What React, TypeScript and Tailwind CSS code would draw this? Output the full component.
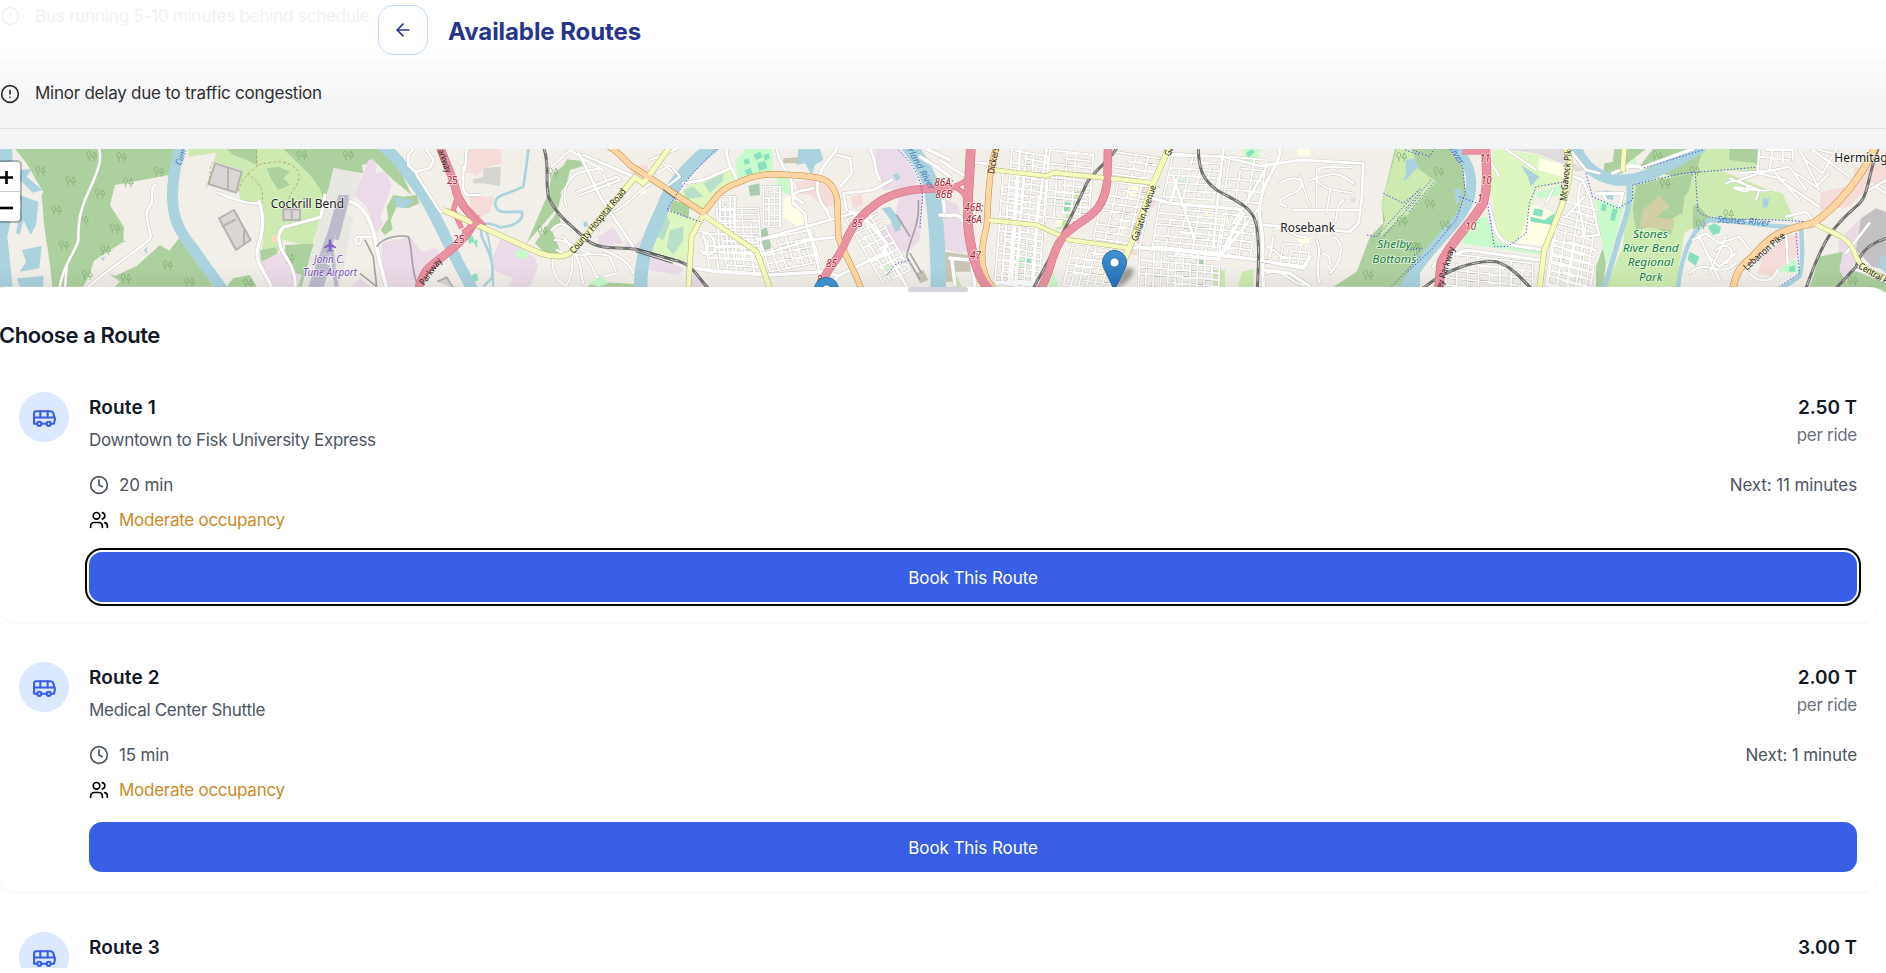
import { ArrowLeft, Bus, CircleAlert, Clock, Users } from 'lucide-react';

type Road = [string, number];
type Label = { t: string; x: number; y: number; w?: number; r?: number; s?: number; c?: string; i?: boolean };
type Tile = {
  x: number;
  areas: [string, string][];
  water: Road[];
  streets: Road[];
  rails?: string[];
  roads: [string, string, number][];
  paths?: string[];
  trees?: number[][];
  labels: Label[];
};

const FOREST = '#add19e';
const PARK = '#cdebb0';
const WATER = '#aad3df';
const IND = '#ebdbe8';
const SPORT = '#c8facc';
const PITCH = '#88e0be';
const RETAIL = '#f5dcd9';
const SCHOOL = '#ffffe5';
const GOLF = '#def6c0';
const RED = '#e892a2';
const ORANGE = '#fcd6a4';
const YELLOW = '#f7fabf';

function grid(x: number, y: number, w: number, h: number, nx: number, ny: number, skx = 0, sky = 0) {
  let d = '';
  for (let i = 0; i <= nx; i++) {
    const px = x + (w * i) / nx;
    const py = y + (sky * i) / nx;
    const cut = (i * 37) % 3 === 1 ? h * 0.3 : 0;
    d += `M${px + (skx * cut) / h} ${py + cut}L${px + skx} ${py + h}`;
  }
  for (let j = 0; j <= ny; j++) {
    const px = x + (skx * j) / ny;
    const py = y + (h * j) / ny;
    const cut = (j * 53) % 4 === 1 ? 0.35 : 0;
    d += `M${px + w * cut} ${py + sky * cut}L${px + w} ${py + sky}`;
  }
  return d;
}

const tiles: Tile[] = [
  {
    x: 0,
    areas: [
      [WATER, 'M0 27H37L40 200 22 290 38 440H0Z'],
      [WATER, 'M62 90L95 88 80 110 128 150 98 158 60 120ZM58 165L115 185 108 255 92 285 70 240 60 282 48 280 64 200ZM66 330L125 318 118 385 60 395 78 365ZM50 415L130 408 130 440H60Z'],
      [FOREST, 'M45 27H530L525 60 508 105 345 135 330 195 372 262 370 305 282 362 268 405 250 440H157L150 375 133 262 125 165 130 155 108 120 80 70Z'],
      [FOREST, 'M325 400L345 408 410 378 480 315 508 332 540 290 640 440H345L360 425Z'],
      [PARK, 'M565 27H1090L1085 100 1000 85 960 240 935 320 850 300 830 350 780 360 790 300 780 200 725 185 715 155 725 90 640 65 650 38 565 50Z'],
      [FOREST, 'M680 27H770L772 75 740 60 700 45ZM800 85L835 80 870 95 850 115 870 135 835 150 815 120ZM880 27H1150L1165 60 1085 75 1090 100 1000 85 985 150 970 180 960 145 930 105 900 75 850 27Z'],
      [FOREST, 'M780 330L830 322 830 340 785 372ZM855 315L960 310 905 440H888L885 400 855 350ZM680 440L700 415 750 405 770 440Z'],
      [IND, 'M845 335L888 400 905 405 895 440H815L775 370Z'],
      [IND, 'M1062 165L1100 75 1105 60 1122 57 1132 70 1127 100 1160 95 1175 140 1140 230 1150 250 1130 280 1100 200Z'],
      [IND, 'M1145 310L1230 290 1265 335 1310 325 1318 345 1255 400 1245 440H1150ZM1055 440L1080 415 1110 440Z'],
      [FOREST, 'M1180 165L1210 170 1250 165 1258 190 1225 205 1190 200 1172 240 1178 268 1155 285 1142 270 1165 235 1160 200Z'],
      [FOREST, 'M1090 27H1145L1200 90 1235 165 1180 120 1140 80Z'],
      [WATER, 'M1182 170L1240 182 1215 205 1190 202Z'],
      [RETAIL, 'M1405 27H1440V100L1400 100ZM1405 165H1440V230L1420 210Z'],
      ['#e8e7e2', 'M1003 83L1083 103 1040 225 1060 235 1020 440H905L960 240Z'],
      ['#bbbbcc', 'M1015 165H1047L955 440H925L985 270Z'],
      [PITCH, 'M1400 290L1415 285 1422 303 1408 312ZM1420 305L1432 298V325ZM1415 408L1428 402 1435 418 1422 425Z'],
      ['#fad9c0', 'M815 288L830 285 830 305 820 312Z'],
      [WATER, 'M302 355L316 350 310 363ZM366 300L378 303 372 308ZM432 330L442 320 440 342Z'],
    ],
    water: [
      ['M540 15C525 80 515 130 518 180C520 260 560 300 590 340C620 385 640 410 672 455', 33],
      ['M1135 10C1190 45 1215 90 1260 150C1300 210 1330 280 1360 340C1380 380 1395 410 1425 460', 34],
    ],
    streets: [
      ['M295 20C310 60 290 100 268 150C240 210 235 240 235 300C225 340 190 370 178 445M200 380L195 445', 5],
      ['M467 135C450 140 460 170 455 190C430 220 440 230 453 290C450 310 300 400 262 445', 5],
      ['M652 158C700 175 740 195 780 190', 5],
      ['M778 185C800 260 780 290 772 330C765 370 800 400 815 445', 8],
      ['M975 165L962 232 850 262C830 280 835 300 845 330C870 370 890 400 885 445', 7],
      ['M1052 185C1100 200 1120 260 1130 320S1150 400 1160 445', 9],
      ['M1115 290H1085C1060 285 1060 315 1080 312L1085 292', 5],
      ['M1250 100L1225 75V45L1240 27M1245 95L1290 85 1300 60 1280 30M1250 105L1320 215 1345 215M1390 80V150L1400 165H1440M1395 90L1400 27', 5],
    ],
    rails: [],
    roads: [
      [RED, 'M1318 15C1340 80 1360 110 1370 160C1385 200 1410 220 1450 262', 22],
      [RED, 'M1425 225C1425 280 1340 340 1290 380Q1265 400 1255 450', 22],
      [RED, 'M1375 160L1360 210 1385 265', 12],
      [YELLOW, 'M1342 213L1450 265', 13],
    ],
    paths: [],
    trees: [[275, 48], [365, 50], [122, 92], [212, 122], [477, 94], [300, 160], [170, 210], [250, 240], [192, 315], [345, 265], [317, 330], [503, 375], [568, 425], [378, 415], [385, 127], [262, 405], [745, 430], [868, 355], [1045, 45], [905, 45]],
    labels: [
      { t: 'Cockrill Bend', x: 812, y: 203, w: 220, s: 37 },
      { t: 'John C.', x: 942, y: 370, w: 92, s: 31, c: '#7a4fb5', i: true },
      { t: 'Tune Airport', x: 909, y: 407, w: 162, s: 31, c: '#7a4fb5', i: true },
      { t: '25', x: 1340, y: 133, w: 34, s: 32, c: '#b02a48' },
      { t: '25', x: 1360, y: 308, w: 34, s: 32, c: '#b02a48' },
      { t: 'arkway', x: 1313, y: 32, w: 72, r: 70, s: 28 },
      { t: 'Parkway', x: 1272, y: 437, w: 92, r: -54, s: 28 },
      { t: 'Cum', x: 542, y: 78, w: 50, r: -68, s: 28, c: '#4a80b8', i: true },
    ],
  },
  {
    x: 1410,
    areas: [
      [RETAIL, 'M0 27H90L98 70 40 85 20 110 0 90ZM0 170H72L60 215 30 235 0 230Z'],
      [FOREST, 'M282 75L290 58 330 62 340 78 300 90 290 130 270 160H235L245 105ZM235 160H275L265 200 170 310ZM265 210L272 250 245 270 275 342 230 345 195 310ZM350 440L380 425 500 433V440Z'],
      [IND, 'M90 300L130 305 195 355 205 380 180 440H115L130 415 80 395 60 370ZM385 290L430 260 460 310 415 315 440 330 385 315ZM462 300L490 320 520 290V330H470ZM545 345L640 385 625 405 535 390ZM670 400L720 440H660ZM1215 27H1290L1345 120 1330 140 1240 150 1222 90ZM1215 270L1270 250 1290 160 1360 155 1350 300 1310 340 1250 310Z'],
      [SPORT, 'M135 335L155 328 175 340 165 358 135 350ZM355 430L400 408 415 430 385 440ZM795 60L830 27H905L912 110 860 112 805 120ZM920 115L955 112 962 165 925 150Z'],
      [GOLF, 'M570 200L690 240 665 290 645 368 545 335 552 280ZM650 140L780 85 795 115 750 160 710 205 690 210 625 165Z'],
      [FOREST, 'M608 180L660 195 655 235 598 210Z'],
      ['#aacbaf', 'M835 137L868 130 870 165 840 168ZM870 270L890 262 905 325 870 335Z'],
      [SCHOOL, 'M940 175L970 168 970 200 1000 210 1002 255 980 258 940 230ZM505 148L525 145 528 160 512 165Z'],
      [RETAIL, 'M480 80L530 75 550 115 520 125 485 105ZM975 125L1040 118 1090 145 1100 200 1060 200 1020 165 985 160ZM1142 170L1175 162 1180 195 1150 205Z'],
      [PITCH, 'M820 60L835 55 840 70 825 75ZM850 45L870 35 878 50 860 60ZM880 45L895 40 900 55 885 62ZM825 90L842 83 848 100 830 105ZM862 70L885 62 892 85 868 92ZM0 285L10 290V310L0 300ZM5 405L20 400 25 420 12 425Z'],
      [WATER, 'M985 27H1050L1060 60 1035 75 1025 105 1005 70 980 75ZM1268 105L1285 100 1292 115 1278 122ZM1235 205L1260 200 1295 245 1290 270 1275 275 1262 240ZM340 248L350 243 355 258 342 262Z'],
      ['#b8dfc7', 'M640 150L670 140 700 170 650 178ZM700 130L760 100 760 120 720 160ZM560 290L580 240 590 225 600 250 580 300ZM600 270L640 260 640 300 610 345 590 320Z'],
      ['#d6d4d0', 'M40 85L92 80 90 138 40 130 10 130 8 118 40 112Z'],
      ['#c8c5b4', 'M940 55L985 52V70H940ZM1340 400L1360 390 1375 420 1350 430Z'],
      [SPORT, 'M1240 385L1265 368 1272 390 1250 408Z'],
    ],
    water: [
      ['M175 27C170 80 165 110 160 140C100 170 80 160 75 190C80 225 105 215 155 215C165 240 130 260 90 262C40 240 30 250 35 290C60 340 75 380 65 415L40 440', 8],
      ['M45 260C60 300 70 380 70 440', 6],
      ['M745 5C650 80 600 140 580 200C540 290 510 340 512 455', 40],
      ['M1310 10C1350 60 1385 110 1390 180C1400 260 1405 330 1405 450', 46],
    ],
    streets: [
      [grid(880, 140, 50, 120, 3, 7) + grid(750, 170, 45, 100, 3, 5) + grid(700, 280, 160, 110, 6, 6, 20, 10), 3],
      [grid(870, 300, 150, 95, 6, 4, 30, -30), 3],
      [grid(740, 205, 125, 150, 5, 8, 10, 0), 3],
      [grid(1130, 240, 80, 190, 4, 9, 110, -40), 3],
      ['M680 275C710 270 735 290 735 320S700 350 690 330M695 290C720 300 720 340 700 335M245 270C280 230 300 270 350 300M255 300C300 300 320 330 360 340M260 330C320 360 380 330 420 350M280 290C320 330 310 400 290 435M300 320C340 370 330 400 340 430M340 345C380 380 370 420 385 410M400 330C450 350 480 370 490 400M250 350C240 400 270 430 290 438M420 350L440 400 400 410', 4],
      ['M245 80L300 30 345 60 400 90M320 155L440 110 450 120 330 165M290 200C270 150 300 100 340 95L390 85M430 215C480 195 500 150 545 130M400 105L420 140M540 60L620 27M560 100L600 75 630 110 590 140M560 50L610 100', 4],
      ['M325 40C350 80 370 130 390 170L450 260 490 320M340 45L410 75 490 110M770 25C765 60 790 90 800 120M640 130L700 120 780 85M920 27C930 80 960 100 965 130L970 190 1005 220 1010 260 1030 320 1050 400M1100 27C1080 60 1050 80 1050 110C1030 140 1050 190 1070 210L1080 235M1000 190L970 170 980 155 1030 145M865 300L1000 262 1130 225 1170 215M870 345L1020 300 1110 290M1130 210L1120 160 1210 150 1265 120M1200 27C1220 60 1210 90 1230 120M1100 45L1140 55 1145 100 1110 140', 6],
      ['M660 382L740 395 900 405 1060 395 1105 408 1240 340 1250 310 1180 230 1140 215M1105 408L1070 445M1240 320L1310 440M1350 50L1400 80 1440 110M1370 27L1440 60M1415 140L1425 220 1440 230', 8],
    ],
    rails: ['M220 20C240 70 225 120 235 170C260 230 310 260 350 300C390 330 430 320 500 328L610 360C670 370 680 410 715 445'],
    roads: [
      [YELLOW, 'M-80 210L0 245 200 335C240 352 280 352 300 340L350 285 495 112 520 130 600 20', 15],
      [YELLOW, 'M655 445L665 290 700 225 860 335 900 445', 14],
      [ORANGE, 'M400 10Q440 30 480 75L700 218C730 190 740 150 800 130C860 100 900 100 960 105C1060 110 1090 115 1102 180L1105 290C1120 340 1150 380 1175 450', 16],
      [RED, 'M1450 146C1350 142 1290 150 1235 180C1160 230 1140 270 1115 330C1095 370 1070 390 1060 420', 22],
      [RED, 'M-20 200L20 250-20 280', 16],
    ],
    paths: ['M740 27C660 100 620 160 590 210L690 245M1285 30C1340 80 1365 140 1355 200L1350 262M1250 405L1280 370 1320 360'],
    trees: [[250, 97], [218, 272]],
    labels: [
      { t: 'County Hospital Road', x: 312, y: 343, w: 245, r: -50, s: 28 },
      { t: '86A;', x: 1393, y: 138, w: 57, s: 31, c: '#a8242e', i: true },
      { t: '86B', x: 1396, y: 174, w: 51, s: 31, c: '#a8242e', i: true },
      { t: '85', x: 1145, y: 260, w: 33, s: 31, c: '#a8242e', i: true },
      { t: '85', x: 1068, y: 382, w: 33, s: 31, c: '#a8242e', i: true },
      { t: 'rland River', x: 1312, y: 30, w: 138, r: 61, s: 27, c: '#4a80b8', i: true },
      { t: '8', x: 1040, y: 430, w: 16, s: 31, c: '#a8242e', i: true },
    ],
  },
  {
    x: 2820,
    areas: [
      [IND, 'M5 225L60 225 85 335 60 340 5 325ZM0 170L55 195 60 225 5 225Z'],
      ['#c8c5b4', 'M8 335L90 345V395H40V425H8Z'],
      [FOREST, 'M1365 27H1440V440H1180L1250 395 1290 290 1330 250 1325 190Z'],
      [PARK, 'M1370 27H1440V185L1320 290 1335 240 1325 190Z'],
      [SPORT, 'M910 27H960L955 60 915 68ZM720 120L740 118V135H722ZM340 395L355 440H325ZM225 350H270V378H225Z'],
      [PITCH, 'M918 40L935 27 945 35 925 55ZM255 353H272V373H255ZM852 222H865V245H852ZM375 185L400 190 385 235 370 210ZM480 380L497 385 490 415 478 405Z'],
      [PARK, 'M820 390H855V440H820ZM905 395L940 388V440H895ZM410 150L425 155 385 260 350 270 355 230 375 235Z'],
      [SCHOOL, 'M1070 27H1112V48H1075ZM572 130L598 128 592 168H568ZM790 205L825 210 815 240 795 225ZM832 213L865 215V248H835ZM1075 295L1110 293 1100 325 1080 315ZM468 375L490 378 515 405 490 425 465 400ZM350 228L370 225 365 260 345 260Z'],
      [RETAIL, 'M605 135L625 138 615 165H600ZM630 175L650 180 640 205H625ZM585 270L600 275 605 310 590 320ZM570 330L600 332 595 345 572 345ZM785 350L805 350 800 375 785 370Z'],
      ['#aacbaf', 'M765 348L787 350 792 380 770 370Z'],
      [PARK, 'M50 405L65 440H42Z'],
      [YELLOW, 'M110 415L140 440H112Z'],
      [WATER, 'M1440 70L1410 80 1390 120 1430 115ZM0 220L10 440H0ZM1440 360L1400 440H1440Z'],
      [IND, 'M1232 170L1250 175 1245 187 1232 185Z'],
    ],
    water: [],
    streets: [
      [grid(215, 30, 110, 400, 5, 22, -30, 20), 3],
      [grid(330, 30, 130, 200, 5, 10, -15, 15), 3],
      [grid(190, 95, 60, 330, 3, 15, -25, 10), 3],
      [grid(520, 35, 140, 260, 4, 12, -60, 20), 3],
      [grid(400, 310, 160, 125, 7, 6, -30, 20), 3],
      [grid(600, 320, 240, 120, 11, 6, -5, 20), 3],
      [grid(660, 185, 200, 150, 5, 9, -25, 20), 3],
      [grid(700, 40, 150, 130, 5, 6, -30, 10), 3],
      [grid(870, 50, 110, 130, 3, 4, -20, 10), 3],
      [grid(1030, 310, 80, 60, 3, 3, -10, 8), 3],
      [grid(850, 220, 100, 120, 3, 5, -20, 15), 3],
      ['M1130 90C1160 70 1210 90 1240 80M1130 120C1150 150 1190 150 1240 160M1130 90V210M1060 210H1260M1170 150L1160 220M1080 110L1110 200', 3],
      ['M1000 270C1040 250 1060 300 1100 290M980 320C1020 330 1010 360 1050 355M1130 300C1150 340 1120 380 1140 430M1180 290C1220 310 1200 370 1170 400M1020 130C1080 90 1110 140 1060 160S1010 190 1040 200M1110 120C1160 110 1180 80 1240 130M980 400C1030 380 1050 430 1090 435M1150 340C1190 350 1150 400 1180 390M1000 290L990 350M1210 180C1180 200 1200 240 1180 250', 4],
      ['M320 27L310 100 290 260 280 440M240 27L225 260 215 420M0 60C40 90 60 100 80 110M80 65L150 72M690 45L850 50 960 78 1080 60 1270 70 1265 180 1255 250 1230 275 970 255M850 27L830 210 820 320M960 200L845 345M980 80L930 170 880 250M700 110L760 290M690 190L710 120', 6],
      ['M640 175L690 190 900 208M570 322L700 330 960 360 1090 385 1110 350M1020 27C1020 90 950 120 960 240C975 300 965 350 970 440M970 390L1050 400 1110 440M840 345L910 220M0 225C60 230 50 210 80 260L105 440M30 355L90 360M35 355L45 435M170 430L215 425 275 435', 8],
    ],
    rails: ['M530 25C500 70 460 95 440 130C400 220 360 300 280 445', 'M775 20C775 90 790 120 830 150C900 190 935 200 948 250C960 310 955 380 952 445'],
    roads: [
      [YELLOW, 'M165 90L320 108 340 98 640 128', 12],
      [YELLOW, 'M140 240L290 255 390 300 570 325', 12],
      [YELLOW, 'M690 15L640 130 590 270 520 440', 16],
      [ORANGE, 'M170 20C145 90 145 180 140 260C120 330 120 400 160 445', 16],
      [RED, 'M93 10C90 110 75 230 90 300C100 360 120 420 150 450', 26],
      [RED, 'M504 15L502 120C490 240 420 230 370 290C330 340 335 400 300 450', 22],
      [RED, 'M40 140C70 150 80 170 90 210', 12],
      [RED, 'M45 138C70 128 85 120 92 100', 12],
    ],
    paths: ['M1395 30L1440 45M1440 145L1310 290 1280 285M1440 165L1330 290M1440 350L1355 440M1330 160L1390 190 1440 150'],
    trees: [[1385, 50], [1387, 243], [1285, 405], [1422, 320]],
    labels: [
      { t: 'Rosebank', x: 1021, y: 275, w: 164, s: 36 },
      { t: 'Gallatin Avenue', x: 592, y: 305, w: 175, r: -71, s: 28 },
      { t: 'Ga', x: 690, y: 50, w: 30, r: -68, s: 28 },
      { t: 'Dickers', x: 162, y: 103, w: 82, r: -79, s: 28 },
      { t: '46B;', x: 73, y: 213, w: 58, s: 31, c: '#a8242e', i: true },
      { t: '46A', x: 77, y: 248, w: 48, s: 31, c: '#a8242e', i: true },
      { t: '47', x: 90, y: 356, w: 33, s: 31, c: '#a8242e', i: true },
      { t: 'Shelby', x: 1312, y: 325, w: 102, s: 34, c: '#12803a', i: true },
      { t: 'Bottoms', x: 1297, y: 368, w: 132, s: 34, c: '#12803a', i: true },
    ],
  },
  {
    x: 4218,
    areas: [
      [FOREST, 'M0 27H130L170 80 180 160 150 240 80 320 0 400Z'],
      [PARK, 'M0 27H20L30 80 90 125 0 230Z'],
      [WATER, 'M0 60L25 55 38 80 0 120ZM145 148L165 145 170 170 150 195Z'],
      [GOLF, 'M265 27L400 45 460 80 470 130 390 150 360 290 310 310 265 300 260 180 240 130Z'],
      [SCHOOL, 'M400 55L480 75 485 115 395 90ZM375 195L440 215 445 240 420 315 335 310 350 270Z'],
      [SPORT, 'M175 290L200 240 245 230 265 300 310 320 410 325V345L165 310ZM565 175L640 195 660 180 605 375 590 320ZM660 27H690V70H660ZM385 160L465 135V165L400 175ZM1120 370L1170 360 1180 400 1120 395Z'],
      [PITCH, 'M385 205L412 210 408 230 380 225ZM372 230L415 240 445 220 440 255 375 245ZM588 190L602 195 598 215 585 210ZM620 205L635 210 625 245 612 240ZM850 335L880 350 870 378 845 360ZM1148 380L1168 375V395H1150Z'],
      ['#dfdcdc', 'M300 27H480L490 60 535 90 510 95 480 75 390 40Z'],
      [PARK, 'M670 120L875 100 890 240 835 280 810 440H600L650 320Z'],
      [FOREST, 'M625 27H720L650 80 650 100 590 110 595 70 620 65ZM740 27H1055V75L880 95 800 110 700 80ZM690 135L860 100 850 150 835 170 830 220 800 235 795 285 740 260 690 270 680 210ZM570 380L590 325 600 370 590 440H570ZM860 200L900 180 915 240 860 270Z'],
      [PARK, 'M890 27H970V60L1050 70V95L940 90 1090 150 1130 160 1165 240H915L880 200 870 100Z'],
      ['#d3cfa4', 'M710 210L760 165 790 200 750 230 805 240 800 270 700 260Z'],
      [RETAIL, 'M1245 155L1340 135 1345 85 1440 60V135L1395 130 1330 200 1240 210ZM1140 290L1180 280V340L1140 370 1100 410 1055 400 1070 350ZM170 27H240L230 45H180Z'],
      [IND, 'M1300 300L1365 235 1400 260 1380 300 1330 400 1290 420Z'],
      ['#c4c1c4', 'M1365 235L1410 205 1440 215V390L1400 380 1350 330Z'],
      [FOREST, 'M1240 350L1310 335 1300 390 1330 440H1210L1225 400ZM1340 390L1440 430V480H1290Z'],
      [WATER, 'M345 75L400 110 375 140 365 110ZM1070 175L1090 175 1085 200 1070 205ZM595 150L625 155 620 180 598 175ZM1425 350L1440 345V400L1420 380Z'],
      [PITCH, 'M905 260L925 250 945 262 940 280 920 285Z'],
    ],
    water: [
      ['M135 10C185 60 205 100 192 170C175 240 80 310 30 390L-10 450', 30],
      ['M505 10C530 80 570 110 630 120C720 125 780 80 890 20', 34],
      ['M668 130C675 200 660 230 640 290C620 360 610 400 590 450', 16],
      ['M815 450C825 360 850 270 910 240C1000 240 1090 265 1185 260C1190 320 1190 380 1180 410L1120 450', 13],
    ],
    streets: [
      [grid(465, 180, 110, 250, 4, 11, -40, 30), 3],
      [grid(440, 300, 130, 135, 4, 6, -20, 30), 3],
      [grid(120, 340, 260, 95, 8, 4, 0, 30), 3],
      ['M860 300L900 280 940 310 1000 290 1030 330M850 400C900 350 940 420 990 370M900 340L940 380 990 340M880 290L940 420M960 290L910 400M930 330C960 300 1000 330 960 370M960 130C1010 100 1060 170 1000 150S1080 160 1090 150M1000 120L1060 100 1140 120M970 115L1060 150 1050 180M1060 27L1055 100 1150 80 1200 150M1080 30H1160V60M1060 50L1150 60M1100 30L1090 90M1130 30V70M1200 60L1250 100 1290 30M1220 30L1330 110M1170 100L1230 140 1270 100M1240 30L1360 60M1000 100L1100 90 1180 180M1140 230L1200 215 1220 240M1180 27L1240 150M300 27L390 90M250 60L280 110M420 190L440 150', 4],
      ['M490 27L540 90 580 100M480 100L530 120 555 180 580 285M525 130C500 190 540 240 530 290L580 285M535 170L480 230M1030 400C1060 430 1100 430 1115 390M1140 280L1145 370M1410 140L1440 160M1390 150L1440 120M1120 120L1240 200M1320 340L1390 250M1350 390L1440 410M80 380L170 270', 5],
      ['M245 190C270 240 250 300 330 318L410 330M130 350L180 330 400 360M655 80H700M705 85L770 60 860 27M570 160H650L640 200M590 160L600 180M680 75L620 100', 7],
    ],
    rails: ['M50 445C120 390 200 360 270 365C320 380 350 420 375 445', 'M1420 15C1380 120 1390 170 1350 200C1280 260 1250 300 1200 445', 'M1440 295C1390 310 1360 340 1350 380L1290 445'],
    roads: [
      [RED, 'M170 32H240', 20],
      [RED, 'M237 15C245 100 245 170 225 200C180 270 130 310 105 370L98 450', 25],
      [YELLOW, 'M470 15C500 50 500 90 470 190L415 330 400 450', 15],
      [YELLOW, 'M655 20L650 95', 14],
      [YELLOW, 'M1225 250C1270 280 1330 280 1350 350C1370 390 1400 400 1450 420', 13],
      [ORANGE, 'M1410 15C1380 90 1300 200 1220 250C1120 270 1090 290 1040 350C1000 380 990 400 980 450', 19],
    ],
    paths: ['M130 27L170 80 178 160 150 240 75 330 0 400', 'M20 30L70 50 85 27M0 205L75 120M10 215L85 125M160 170L215 190M245 190L265 320H305L360 280 370 190 390 140 480 125M540 100L560 170 635 205 680 180V135L830 100 1050 82M868 100L875 210C900 250 1000 230 1195 245M890 30L710 85M1170 280L1180 400 1120 440M0 330L50 325 20 350'],
    trees: [[98, 95], [72, 192], [118, 255], [755, 47], [777, 130], [867, 93], [885, 253], [968, 222], [32, 320], [1340, 422]],
    labels: [
      { t: 'Stones', x: 681, y: 294, w: 105, s: 34, c: '#12803a', i: true },
      { t: 'River Bend', x: 650, y: 336, w: 168, s: 34, c: '#12803a', i: true },
      { t: 'Regional', x: 665, y: 379, w: 138, s: 34, c: '#12803a', i: true },
      { t: 'Park', x: 699, y: 422, w: 70, s: 34, c: '#12803a', i: true },
      { t: '11', x: 222, y: 66, w: 30, s: 31, c: '#a8242e', i: true },
      { t: '10', x: 225, y: 133, w: 32, s: 31, c: '#a8242e', i: true },
      { t: '10', x: 178, y: 270, w: 32, s: 31, c: '#a8242e', i: true },
      { t: '1', x: 214, y: 187, w: 16, s: 31, c: '#a8242e', i: true },
      { t: 'ey Parkway', x: 108, y: 448, w: 130, r: -73, s: 28 },
      { t: 'McGavock Pike', x: 481, y: 184, w: 168, r: -84, s: 28 },
      { t: 'Stones River', x: 932, y: 247, w: 160, r: 4, s: 28, c: '#4a80b8', i: true },
      { t: 'Lebanon Pike', x: 1022, y: 392, w: 155, r: -41, s: 28 },
      { t: 'Central Pike', x: 1355, y: 384, w: 130, r: 30, s: 28 },
      { t: 'River', x: 128, y: 22, w: 62, r: 58, s: 27, c: '#4a80b8', i: true },
      { t: 'Hermitage', x: 1285, y: 66, w: 180, s: 36 },
    ],
  },
];

const spurs = [
  'M1130 320C1150 290 1200 285 1225 290C1240 330 1230 390 1255 440M1095 300L1120 350 1130 440M1080 400L1130 440',
  'M2755 180C2760 260 2730 290 2720 350L2760 420M2690 225L2730 290M2765 400L2730 340',
];

function Pin() {
  return (
    <svg width="25" height="41" viewBox="0 0 25 41" className="overflow-visible">
      <defs>
        <linearGradient id="pin" x1="0" y1="0" x2="0" y2="1">
          <stop offset="0" stopColor="#4194d0" />
          <stop offset="1" stopColor="#1f66b0" />
        </linearGradient>
        <filter id="soft">
          <feGaussianBlur stdDeviation="2" />
        </filter>
      </defs>
      <path d="M13 40L20 22Q26 14 32 20Q32 28 13 40Z" fill="#000" opacity="0.35" filter="url(#soft)" />
      <path d="M12.5 .5C5.9 .5 .5 5.9 .5 12.3c0 2.8 1 5.2 2.2 7.6L12.5 40.5l9.8-20.6c1.2-2.4 2.2-4.8 2.2-7.6C24.5 5.900 19.100 .5 12.5 .5Z" fill="url(#pin)" stroke="#2e6c97" />
      <circle cx="12.500" cy="12.500" r="4.400" fill="#fff" stroke="#2e6c97" strokeWidth=".6" />
    </svg>
  );
}

function CityMap() {
  return (
    <svg viewBox="0 27 5658 453" width="1886" height="151" preserveAspectRatio="none" className="block" fontFamily="'Noto Sans', sans-serif">
      <defs>
        <g id="tree" fill="none" stroke="#86b07a" strokeWidth="2.500">
          <path d="M-8 15V2M-8 5L-14 0V-9L-8 -14L-3 -9V0ZM8 15V4M8 4L1 4L8 -12L15 4Z" />
        </g>
        <linearGradient id="fade" x1="0" y1="0" x2="0" y2="1">
          <stop offset="0" stopColor="#000" stopOpacity="0" />
          <stop offset="1" stopColor="#000" stopOpacity="0.05" />
        </linearGradient>
      </defs>
      <rect y="27" width="5658" height="453" fill="#f2efe9" />
      {tiles.map((t) => (
        <g key={t.x} transform={`translate(${t.x} 0)`}>
          {t.areas.map(([c, d], i) => (
            <path key={i} d={d} fill={c} />
          ))}
        </g>
      ))}
      {tiles.map((t) => (
        <g key={t.x} transform={`translate(${t.x} 0)`} fill="none">
          {t.water.map(([d, w], i) => (
            <path key={i} d={d} stroke={WATER} strokeWidth={w} />
          ))}
          {(t.trees ?? []).map(([x, y], i) => (
            <use key={i} href="#tree" x={x} y={y} />
          ))}
        </g>
      ))}
      <g stroke="#b5b3b3" strokeWidth="6" fill="#d9d6d3" strokeLinejoin="round">
        <path d="M645 70L725 95 708 158 625 132ZM684 83V148M657 235L702 210 752 300 708 330ZM665 260L708 238M732 270V315M850 208H900V240H850ZM875 208V240" />
        <path d="M1312 425L1340 412 1360 445" />
      </g>
      <path d="M1030 170L955 440M985 375L965 440M1042 175L1010 300M990 300L1010 440" fill="none" stroke="#bbbbcc" strokeWidth="12" />
      <path d="M640 65C620 90 640 120 618 140M770 30V80C730 110 720 130 715 155M775 75C830 60 870 60 895 95C910 130 860 160 865 190M740 100C780 130 800 150 780 210" fill="none" stroke="#bf9b5a" strokeWidth="2.500" strokeDasharray="9 6" />
      {tiles.map((t) => (
        <g key={t.x} transform={`translate(${t.x} 0)`} fill="none" strokeLinejoin="round" strokeLinecap="round">
          {t.streets.map(([d, w], i) => (
            <path key={i} d={d} stroke="#c6c3be" strokeWidth={w + 5} />
          ))}
          {t.streets.map(([d, w], i) => (
            <path key={i} d={d} stroke="#fff" strokeWidth={w + 2.5} />
          ))}
          {(t.rails ?? []).map((d, i) => (
            <g key={i}>
              <path d={d} stroke="#707070" strokeWidth="9" />
              <path d={d} stroke="#d6d6d6" strokeWidth="2.500" strokeDasharray="20 22" />
            </g>
          ))}
        </g>
      ))}
      {spurs.map((d) => (
        <path key={d} d={d} fill="none" stroke="#a3a3a3" strokeWidth="5" />
      ))}
      {tiles.map((t) => (
        <g key={t.x} transform={`translate(${t.x} 0)`} fill="none">
          {t.roads.map(([c, d, w], i) => (
            <path key={i} d={d} stroke={c === RED ? '#dc6b82' : c === ORANGE ? '#c68a3c' : '#b3b46c'} strokeWidth={w + 3} />
          ))}
          {t.roads.map(([c, d, w], i) => (
            <path key={i} d={d} stroke={c} strokeWidth={w} />
          ))}
          {(t.paths ?? []).map((d, i) => (
            <path key={i} d={d} stroke="#4545ee" strokeWidth="3" strokeDasharray="4 6" />
          ))}
        </g>
      ))}
      <path d="M1910 325L2025 358M1906 335L2018 370M1990 148L2030 180" stroke="#444" strokeWidth="2.500" fill="none" />
      <path d="M990 298c-3 0-4 4-4 8v5l-14 10v4l14-4v8l-6 3v3l10-2 10 2v-3l-6-3v-8l14 4v-4l-14-10v-5c0-4-1-8-4-8Z" fill="#8461c4" />
      {tiles.map((t) => (
        <g key={t.x} transform={`translate(${t.x} 0)`}>
          {t.labels.map((l, i) => (
            <text
              key={i}
              x={l.x}
              y={l.y}
              transform={l.r ? `rotate(${l.r} ${l.x} ${l.y})` : undefined}
              fontSize={l.s}
              fontStyle={l.i ? 'italic' : 'normal'}
              fill={l.c ?? '#222'}
              textLength={l.w}
              lengthAdjust="spacingAndGlyphs"
              stroke={l.r ? 'none' : '#fff'}
              strokeOpacity="0.65"
              strokeWidth="5"
              paintOrder="stroke"
            >
              {l.t}
            </text>
          ))}
        </g>
      ))}
      <rect y="380" width="5658" height="62" fill="url(#fade)" />
    </svg>
  );
}

const routes = [
  { name: 'Route 1', desc: 'Downtown to Fisk University Express', time: '20 min', price: '2.50 T', next: 'Next: 11 minutes', focused: true },
  { name: 'Route 2', desc: 'Medical Center Shuttle', time: '15 min', price: '2.00 T', next: 'Next: 1 minute', focused: false },
  { name: 'Route 3', desc: '', time: '', price: '3.00 T', next: '', focused: false },
];

export default function App() {
  return (
    <div className="h-[973px] w-full overflow-hidden bg-white font-['Inter',sans-serif] text-[17px] leading-[25px]">
      <header className="relative h-[149px] bg-[#f3f4f6]">
        <div className="h-[129px] border-b border-[#e5e2de] bg-linear-to-b from-white from-35% to-[#f3f4f6] to-85%">
          <div className="flex h-[63px] items-start gap-[15px] border-b border-[#f4f4f5] pt-1 text-[#f1f1f2]">
            <CircleAlert className="mt-0.5 size-5" />
            <span className="tracking-[-0.2px]">Bus running 5-10 minutes behind schedule</span>
          </div>
          <div className="flex items-center gap-[15px] pt-[18px] text-[#303030]">
            <CircleAlert className="size-5" />
            <span className="tracking-[-0.24px]">Minor delay due to traffic congestion</span>
          </div>
        </div>
        <div className="absolute top-[5px] left-[378px] flex items-center gap-5">
          <button className="flex size-[50px] items-center justify-center rounded-[15px] border border-[#bfdbfe] bg-white text-[#27348b]">
            <ArrowLeft className="size-5" />
          </button>
          <h1 className="pt-[3px] text-2xl font-bold tracking-[-0.08px] text-[#27348b]">Available Routes</h1>
        </div>
      </header>

      <section className="relative h-[138px]">
        <CityMap />
        <div className="absolute top-[11px] -left-[13px] flex h-[63px] w-[35px] flex-col rounded-[5px] border-2 border-black/25 bg-white bg-clip-padding text-black">
          <span className="flex h-[30px] items-center justify-center border-b border-[#ccc] pt-0.5 pl-1">
            <svg width="13" height="13" viewBox="0 0 13 13" stroke="#000" strokeWidth="2.600"><path d="M0 6.500H13M6.500 0V13" /></svg>
          </span>
          <span className="flex flex-1 items-center justify-center pt-0.5 pl-1">
            <svg width="13" height="4" viewBox="0 0 13 4" stroke="#000" strokeWidth="2.600"><path d="M0 2H13" /></svg>
          </span>
        </div>
        <div className="absolute top-[128px] left-[814px]"><Pin /></div>
        <div className="absolute top-[101px] left-[1102px]"><Pin /></div>
      </section>

      <main className="relative -ml-[21px] h-[681px] w-[1919px] overflow-hidden rounded-t-[30px] bg-white px-5">
        <div className="mx-auto h-[5px] w-[60px] -translate-x-px rounded-full bg-[#d1d5db]" />
        <h2 className="mt-[29px] text-[22px] leading-[28px] font-semibold tracking-[-0.42px] text-[#111827]">Choose a Route</h2>
        <div className="mt-[23px] flex flex-col gap-5">
          {routes.map((r) => (
            <article key={r.name} className="flex h-[250px] w-[1878px] shrink-0 gap-5 rounded-[15px] bg-white p-5 shadow-[0_1px_2px_rgba(0,0,0,0.05)]">
              <div className="flex size-[50px] shrink-0 items-center justify-center rounded-full bg-[#dbe8fd] text-[#385fe6]">
                <Bus className="size-[25px]" />
              </div>
              <div className="flex-1 pt-px">
                <div className="flex justify-between">
                  <div>
                    <h3 className="text-[19px] leading-[30px] font-semibold tracking-[0.15px] text-[#111827]">{r.name}</h3>
                    <p className="mt-[5px] tracking-[-0.3px] text-[#4b5563]">{r.desc}</p>
                  </div>
                  <div className="text-right">
                    <p className="text-[19px] leading-[30px] font-semibold tracking-[-0.1px] text-[#111827]">{r.price}</p>
                    {r.desc && <p className="tracking-[-0.28px] text-[#6b7280]">per ride</p>}
                  </div>
                </div>
                {r.desc && (
                  <>
                    <div className="mt-5 flex justify-between text-[#4b5563]">
                      <span className="flex items-center gap-2.5 tracking-[-0.15px]"><Clock className="-mt-0.5 size-5" />{r.time}</span>
                      <span className="tracking-[-0.12px]">{r.next}</span>
                    </div>
                    <div className="mt-2.5 flex items-center gap-2.5 tracking-[-0.27px] text-[#ca8a27]">
                      <Users className="-mt-0.5 size-5 text-black" />Moderate occupancy
                    </div>
                    <button className={r.focused ? 'mt-[19px] block h-[50px] w-full rounded-[13px] bg-[#385fe6] pt-0.5 tracking-[-0.08px] text-white outline-2 outline-offset-2 outline-black' : 'mt-[19px] block h-[50px] w-full rounded-[13px] bg-[#385fe6] pt-0.5 tracking-[-0.08px] text-white'}>
                      Book This Route
                    </button>
                  </>
                )}
              </div>
            </article>
          ))}
        </div>
      </main>
    </div>
  );
}
